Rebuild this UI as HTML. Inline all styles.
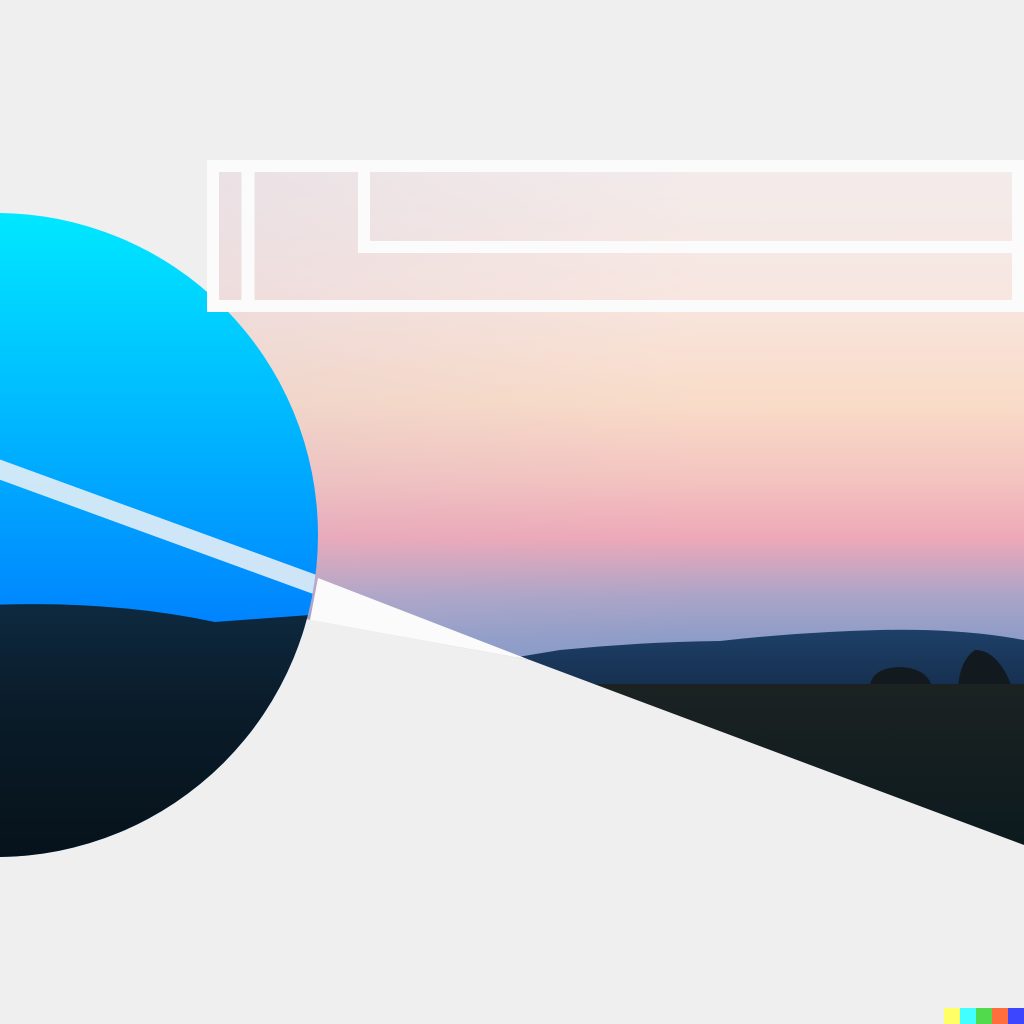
<!DOCTYPE html>
<html><head><meta charset="utf-8"><style>html,body{margin:0;padding:0;background:#f0efef;}svg{display:block}</style></head>
<body>
<svg width="1024" height="1024" viewBox="0 0 1024 1024" xmlns="http://www.w3.org/2000/svg">
<defs>
<linearGradient id="sky" x1="0" y1="160" x2="0" y2="700" gradientUnits="userSpaceOnUse">
<stop offset="0" stop-color="#f2ecec"/>
<stop offset="0.25" stop-color="#f8e6e0"/>
<stop offset="0.45" stop-color="#f9dcc8"/>
<stop offset="0.59" stop-color="#f4c4c0"/>
<stop offset="0.7" stop-color="#eea8b8"/>
<stop offset="0.81" stop-color="#aaa4c8"/>
<stop offset="0.89" stop-color="#8c9cc8"/>
<stop offset="1" stop-color="#7a90c4"/>
</linearGradient>
<linearGradient id="skyl" x1="207" y1="0" x2="700" y2="0" gradientUnits="userSpaceOnUse">
<stop offset="0" stop-color="#c8b8d0" stop-opacity="0.2"/>
<stop offset="1" stop-color="#c8b8d0" stop-opacity="0"/>
</linearGradient>
<linearGradient id="circ" x1="0" y1="213" x2="0" y2="620" gradientUnits="userSpaceOnUse">
<stop offset="0" stop-color="#00e8ff"/>
<stop offset="0.5" stop-color="#00b8ff"/>
<stop offset="1" stop-color="#0084ff"/>
</linearGradient>
<linearGradient id="dark" x1="0" y1="600" x2="0" y2="860" gradientUnits="userSpaceOnUse">
<stop offset="0" stop-color="#0e2a40"/>
<stop offset="0.4" stop-color="#0a1c2a"/>
<stop offset="1" stop-color="#06121a"/>
</linearGradient>
<linearGradient id="hill" x1="0" y1="630" x2="0" y2="685" gradientUnits="userSpaceOnUse">
<stop offset="0" stop-color="#1e4068"/>
<stop offset="1" stop-color="#163050"/>
</linearGradient>
<linearGradient id="ground" x1="0" y1="682" x2="0" y2="845" gradientUnits="userSpaceOnUse">
<stop offset="0" stop-color="#1c2222"/>
<stop offset="1" stop-color="#0c1a1e"/>
</linearGradient>
<clipPath id="cc"><circle cx="-4" cy="535" r="322"/></clipPath>
</defs>
<rect width="1024" height="1024" fill="#f0efef"/>
<rect x="207" y="160" width="817" height="560" fill="url(#sky)"/>
<rect x="207" y="160" width="817" height="560" fill="url(#skyl)"/>
<path d="M500 660 L560 650 Q640 642 720 641 Q800 632 880 630 Q960 628 1024 640 L1024 690 L500 690 Z" fill="url(#hill)"/>
<path d="M870 686 Q872 668 900 667 Q926 668 932 686 Z" fill="#121a20"/>
<path d="M958 687 Q960 660 975 650 Q998 650 1012 687 Z" fill="#121a20"/>
<rect x="500" y="684" width="524" height="170" fill="url(#ground)"/>
<polygon points="318,578 530,660 310,620" fill="#fbfbfb"/>
<polygon points="300,618 530,660 1024,845 1024,1024 0,1024 0,618" fill="#f0efef"/>
<g clip-path="url(#cc)">
<rect x="-10" y="200" width="340" height="670" fill="url(#circ)"/>
<path d="M-10 605 Q110 600 215 622 L310 615 L330 870 L-10 870 Z" fill="url(#dark)"/>
<line x1="-10" y1="466" x2="330" y2="590" stroke="#e4eef6" stroke-opacity="0.9" stroke-width="19"/>
</g>
<g fill="none" stroke="#fbfbfb">
<path d="M1030 166 L213 166 L213 306 L1030 306" stroke-width="12"/>
<line x1="248" y1="166" x2="248" y2="306" stroke-width="13"/>
<path d="M364 166 L364 247 L1030 247" stroke-width="12"/>
<line x1="1018" y1="166" x2="1018" y2="312" stroke-width="12"/>
</g>
<rect x="944" y="1008" width="16" height="16" fill="#ffff66"/>
<rect x="960" y="1008" width="16" height="16" fill="#42ffff"/>
<rect x="976" y="1008" width="16" height="16" fill="#51da4c"/>
<rect x="992" y="1008" width="16" height="16" fill="#ff6e3c"/>
<rect x="1008" y="1008" width="16" height="16" fill="#3c46ff"/>
</svg>
</body></html>
